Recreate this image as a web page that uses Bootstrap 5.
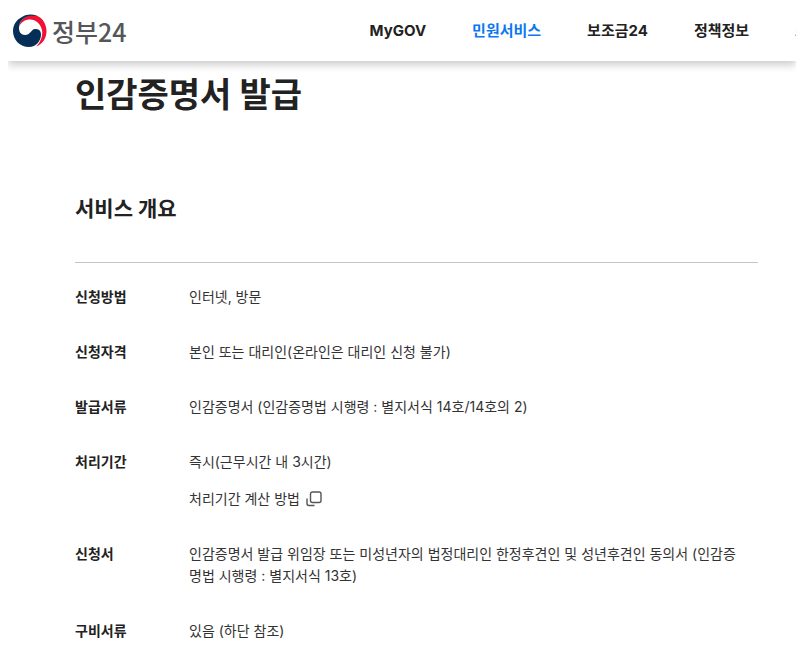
<!DOCTYPE html>
<html lang="ko">
<head>
<meta charset="utf-8">
<meta name="viewport" content="width=device-width, initial-scale=1">
<title>인감증명서 발급 | 정부24</title>
<link href="https://cdn.jsdelivr.net/npm/bootstrap@5.3.0/dist/css/bootstrap.min.css" rel="stylesheet">
<style>
  body { font-family: Inter, "Noto Sans CJK KR", sans-serif; font-size: 14px; line-height: 22px; color: #333; background: #fff; overflow-x: hidden; }
  .site-header { margin-left: 8px; padding-left: 4px; height: 61px; box-shadow: 0 4px 8px rgba(0,0,0,.2); clip-path: inset(0 0 -16px 0); }
  .brand-name { font-family: "Noto Sans CJK KR", sans-serif; font-size: 25px; line-height: 32px; font-weight: 500; color: #54565a; }
  .main-menu { margin-left: 243px; gap: 46px; font-size: 15px; font-weight: 700; }
  .main-menu a { color: #222; padding: 0; white-space: nowrap; }
  .main-menu a.active { color: #0b78f0; }
  .service { padding: 10px 38px 10px 75px; }
  .service h1 { font-size: 34px; line-height: 48px; font-weight: 700; color: #222; margin-bottom: 74px; }
  .service h2 { font-size: 21px; line-height: 32px; font-weight: 700; color: #222; margin-bottom: 37px; }
  .overview { border-top: 1px solid #c4c4c4; padding-top: 23px; gap: 33px; }
  .overview dt { width: 114px; font-weight: 700; color: #222; }
  .overview dd { word-break: break-all; padding-right: 12px; }
  .calc-link { margin-top: 15px; color: #333; gap: 6px; }
</style>
<script src="https://cdn.jsdelivr.net/npm/bootstrap@5.3.0/dist/js/bootstrap.bundle.min.js"></script>
</head>
<body>
<header class="site-header d-flex align-items-center bg-white">
  <a href="#" class="d-flex align-items-center text-decoration-none flex-shrink-0">
    <svg width="36" height="36" viewBox="0 0 36 36" aria-hidden="true">
      <path d="M7 14C8 7 13 2 21 2c8 0 13.500 8 13.500 16 0 7-3.500 13-10.500 15.500C29 29 31 22 30 17 28.500 11 24 6.500 18 6.500c-5 0-9 2.500-11 7.500Z" fill="#ee1235"/>
      <path d="M25 2.800C20 1 15 1 10 4 4 7 1 12 1 18c0 9 7 16 16 16 7 0 12-6 12-12.500 0-4.500-3-5.500-6-5.500-4 0-4 6-10 6-4 0-6-3-6-7C7 8 13 2.800 19 2.800Z" fill="#062f57"/>
    </svg>
    <span class="brand-name ms-1">정부24</span>
  </a>
  <nav class="main-menu nav flex-nowrap" aria-label="주 메뉴">
    <a class="nav-link" href="#">MyGOV</a>
    <a class="nav-link active" aria-current="page" href="#">민원서비스</a>
    <a class="nav-link" href="#">보조금24</a>
    <a class="nav-link" href="#">정책정보</a>
    <a class="nav-link" href="#">소식</a>
  </nav>
</header>
<main class="service">
  <h1>인감증명서 발급</h1>
  <h2>서비스 개요</h2>
  <dl class="overview d-flex flex-column mb-0">
    <div class="d-flex"><dt class="flex-shrink-0">신청방법</dt><dd class="mb-0">인터넷, 방문</dd></div>
    <div class="d-flex"><dt class="flex-shrink-0">신청자격</dt><dd class="mb-0">본인 또는 대리인(온라인은 대리인 신청 불가)</dd></div>
    <div class="d-flex"><dt class="flex-shrink-0">발급서류</dt><dd class="mb-0">인감증명서 (인감증명법 시행령 : 별지서식 14호/14호의 2)</dd></div>
    <div class="d-flex"><dt class="flex-shrink-0">처리기간</dt><dd class="mb-0">즉시(근무시간 내 3시간)
      <a href="#" class="calc-link d-flex align-items-center text-decoration-none">처리기간 계산 방법
        <svg width="16" height="16" viewBox="0 0 16 16" fill="none" stroke="#555" stroke-width="1.4" aria-hidden="true"><rect x="4.500" y="1" width="10.500" height="10.500" rx="2"/><path d="M1 7.500v5q0 2 2 2h5.500"/></svg></a></dd></div>
    <div class="d-flex"><dt class="flex-shrink-0">신청서</dt><dd class="mb-0">인감증명서 발급 위임장 또는 미성년자의 법정대리인 한정후견인 및 성년후견인 동의서 (인감증명법 시행령 : 별지서식 13호)</dd></div>
    <div class="d-flex"><dt class="flex-shrink-0">구비서류</dt><dd class="mb-0">있음 (하단 참조)</dd></div>
  </dl>
</main>
</body>
</html>
